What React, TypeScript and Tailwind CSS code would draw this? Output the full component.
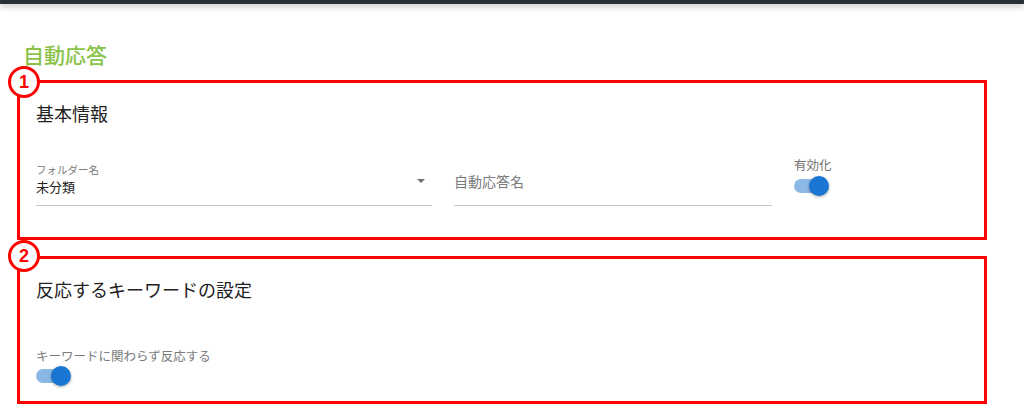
import React from "react";

const font = { fontFamily: '"Noto Sans CJK JP", "Noto Sans", Roboto, sans-serif' };

function Badge({ n, top }: { n: string; top: string }) {
  return (
    <div
      className={`absolute left-[-12px] ${top} w-[32px] h-[32px] rounded-full border-[3px] border-[#ff0000] bg-white flex items-center justify-center`}
    >
      <span className="text-[18px] leading-none font-bold text-[#ff0000] font-['Liberation_Sans',Arial,sans-serif]">
        {n}
      </span>
    </div>
  );
}

function Switch() {
  return (
    <div className="relative w-[32px] h-[14px] rounded-full bg-[#8cb8e6]">
      <div className="absolute right-[-3px] top-[-3px] w-[20px] h-[20px] rounded-full bg-[#1976d2] shadow-[0_1px_3px_rgba(0,0,0,0.35)]" />
    </div>
  );
}

export default function App() {
  return (
    <div className="w-[1024px] h-[416px] bg-white overflow-hidden" style={font}>
      <div className="h-[4px] bg-[#263238] shadow-[0_2px_6px_rgba(0,0,0,0.3)]" />
      <h1 className="mt-[36px] pl-[23px] text-[21px] leading-[28px] font-medium text-[#8bc34a]">
        自動応答
      </h1>

      {/* Box 1 */}
      <div className="relative mt-[12px] ml-[17px] w-[970px] h-[160px] border-[3px] border-[#ff0000]">
        <Badge n="1" top="top-[-17px]" />
        <div className="pt-[18px] pl-[16px]">
          <h2 className="text-[18px] leading-[24px] text-[#212121]">基本情報</h2>
          <div className="mt-[32px] flex items-start">
            {/* Select */}
            <div className="mt-[6px] w-[396px] border-b border-[#c6c6c6] pb-[8px]">
              <div className="text-[10.5px] leading-[14px] text-[#7a7a7a]">フォルダー名</div>
              <div className="flex justify-between items-start h-[20px]">
                <span className="text-[13px] leading-[20px] text-[#212121]">未分類</span>
                <svg width="8" height="4" viewBox="0 0 8 4" className="mt-[2px] mr-[7px]">
                  <path d="M0 0 L8 0 L4 4 Z" fill="#707070" />
                </svg>
              </div>
            </div>
            {/* Text field */}
            <div className="ml-[22px] mt-[14px] w-[318px] border-b border-[#c6c6c6] pb-[14px]">
              <div className="text-[14px] leading-[20px] text-[#7a7a7a]">自動応答名</div>
            </div>
            {/* Switch */}
            <div className="ml-[22px] flex flex-col">
              <div className="text-[12.5px] leading-[16px] text-[#6f6f6f]">有効化</div>
              <div className="mt-[6px]">
                <Switch />
              </div>
            </div>
          </div>
        </div>
      </div>

      {/* Box 2 */}
      <div className="relative mt-[16px] ml-[17px] w-[970px] h-[148px] border-[3px] border-[#ff0000]">
        <Badge n="2" top="top-[-19px]" />
        <div className="pt-[18px] pl-[16px]">
          <h2 className="text-[18px] leading-[24px] text-[#212121]">反応するキーワードの設定</h2>
          <div className="mt-[47px] text-[12.5px] leading-[16px] text-[#7a7a7a]">
            キーワードに関わらず反応する
          </div>
          <div className="mt-[5px]">
            <Switch />
          </div>
        </div>
      </div>
    </div>
  );
}
